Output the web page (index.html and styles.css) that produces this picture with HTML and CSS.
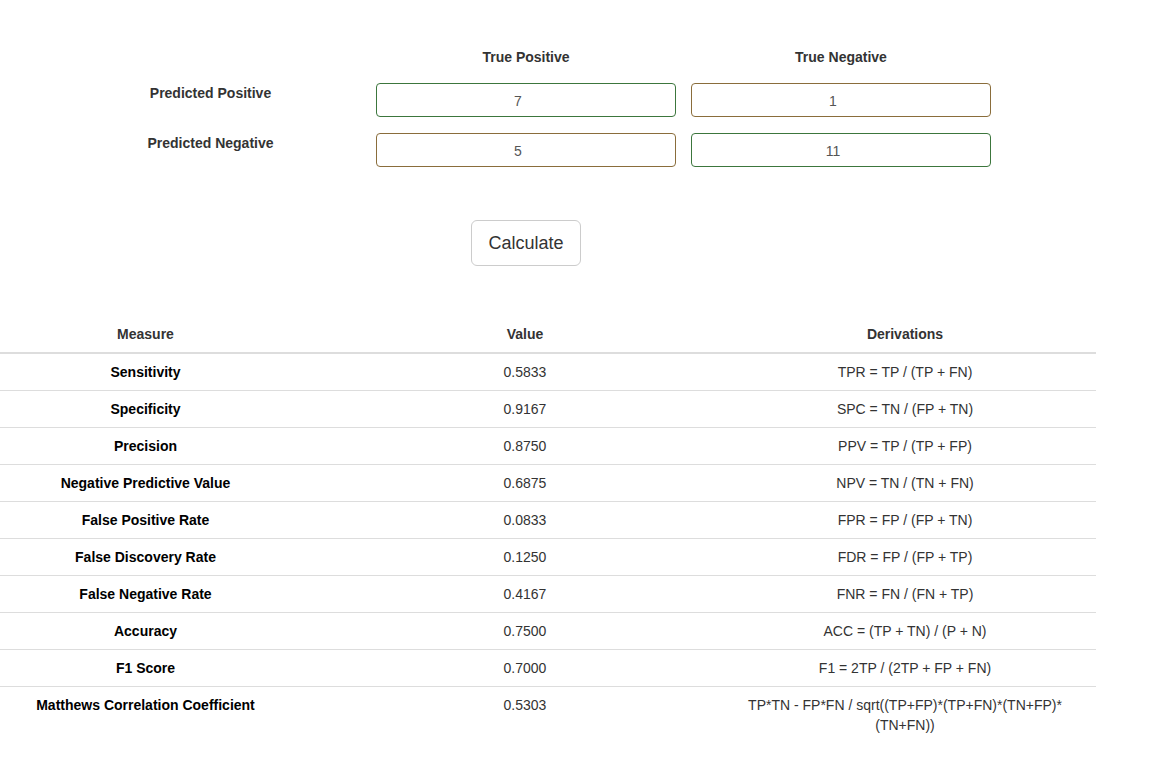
FILE: index.html
```html
<!DOCTYPE html>
<html lang="en">
<head>
<meta charset="utf-8">
<title>Confusion Matrix Calculator</title>
<link rel="stylesheet" href="styles.css">
</head>
<body>
<div class="matrix">
  <div class="cell"></div>
  <div class="col-head">True Positive</div>
  <div class="col-head">True Negative</div>

  <div class="row-label">Predicted Positive</div>
  <input class="field success" type="text" value="7">
  <input class="field warning" type="text" value="1">

  <div class="row-label">Predicted Negative</div>
  <input class="field warning" type="text" value="5">
  <input class="field success" type="text" value="11">

  <div class="cell"></div>
  <div class="btn-wrap"><button class="btn" type="button">Calculate</button></div>
</div>

<table class="results">
  <thead>
    <tr><th class="c1">Measure</th><th class="c2">Value</th><th class="c3">Derivations</th></tr>
  </thead>
  <tbody>
    <tr><td class="c1 m">Sensitivity</td><td class="c2">0.5833</td><td class="c3">TPR = TP / (TP + FN)</td></tr>
    <tr><td class="c1 m">Specificity</td><td class="c2">0.9167</td><td class="c3">SPC = TN / (FP + TN)</td></tr>
    <tr><td class="c1 m">Precision</td><td class="c2">0.8750</td><td class="c3">PPV = TP / (TP + FP)</td></tr>
    <tr><td class="c1 m">Negative Predictive Value</td><td class="c2">0.6875</td><td class="c3">NPV = TN / (TN + FN)</td></tr>
    <tr><td class="c1 m">False Positive Rate</td><td class="c2">0.0833</td><td class="c3">FPR = FP / (FP + TN)</td></tr>
    <tr><td class="c1 m">False Discovery Rate</td><td class="c2">0.1250</td><td class="c3">FDR = FP / (FP + TP)</td></tr>
    <tr><td class="c1 m">False Negative Rate</td><td class="c2">0.4167</td><td class="c3">FNR = FN / (FN + TP)</td></tr>
    <tr><td class="c1 m">Accuracy</td><td class="c2">0.7500</td><td class="c3">ACC = (TP + TN) / (P + N)</td></tr>
    <tr><td class="c1 m">F1 Score</td><td class="c2">0.7000</td><td class="c3">F1 = 2TP / (2TP + FP + FN)</td></tr>
    <tr><td class="c1 m">Matthews Correlation Coefficient</td><td class="c2">0.5303</td><td class="c3">TP*TN - FP*FN / sqrt((TP+FP)*(TP+FN)*(TN+FP)*<br>(TN+FN))</td></tr>
  </tbody>
</table>
</body>
</html>
```
FILE: styles.css
```css
* { box-sizing: border-box; }

html, body {
  margin: 0;
  padding: 0;
  background: #fff;
}

body {
  font-family: "Liberation Sans", Arial, Helvetica, sans-serif;
  font-size: 14px;
  line-height: 20px;
  color: #333;
}

.matrix {
  display: grid;
  grid-template-columns: 301px 300px 300px;
  column-gap: 15px;
  row-gap: 16px;
  padding-top: 47px;
  margin-left: 60px;
}

.col-head {
  font-weight: bold;
  text-align: center;
  color: #333;
}

.row-label {
  font-weight: bold;
  text-align: center;
  color: #333;
  align-self: start;
}

.field {
  display: block;
  width: 300px;
  height: 34px;
  padding: 7px 28px 5px 12px;
  font-family: inherit;
  font-size: 14px;
  line-height: 20px;
  color: #555;
  text-align: center;
  background: #fff;
  border: 1px solid #ccc;
  border-radius: 4px;
  outline: none;
}

.field.success { border-color: #3c763d; }
.field.warning { border-color: #8a6d3b; }

.btn-wrap {
  margin-top: 37px;
  display: flex;
  justify-content: center;
}

.btn {
  height: 46px;
  padding: 10px 16px;
  font-family: inherit;
  font-size: 18px;
  line-height: 24px;
  color: #333;
  background: #fff;
  border: 1px solid #ccc;
  border-radius: 6px;
  cursor: pointer;
}

.results {
  margin-top: 50px;
  width: 1096px;
  border-collapse: collapse;
  table-layout: fixed;
}

.results th,
.results td {
  padding: 8px;
  text-align: center;
  vertical-align: top;
  line-height: 20px;
}

.results th {
  font-weight: bold;
  color: #333;
  border-bottom: 2px solid #ddd;
}

.results td {
  border-top: 1px solid #ddd;
  color: #333;
}

.results td.m {
  font-weight: bold;
  color: #000;
}

.results .c1 { width: 291px; }
.results .c2 { width: 423px; padding-left: 53px; }
.results .c3 { width: 382px; }
```
